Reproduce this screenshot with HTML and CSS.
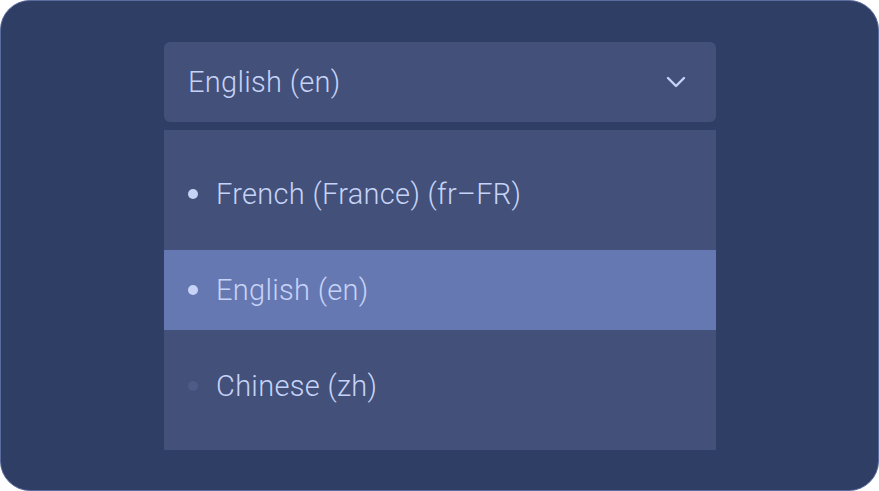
FILE: index.html
```html
<!DOCTYPE html>
<html lang="en">
<head>
  <meta charset="UTF-8" />
  <meta name="viewport" content="width=device-width, initial-scale=1.0"/>
  <title>Language Select</title>
  <link rel="stylesheet" href="styles.css">
</head>
<body>
  <div class="card">
    <div class="select">
      <button class="trigger">
        <span>English (en)</span>
        <svg class="chevron" width="20" height="12" viewBox="0 0 20 12">
          <path d="M2 2 L10 10 L18 2" fill="none" stroke="#c6d3f7" stroke-width="2.4" stroke-linecap="round" stroke-linejoin="round"/>
        </svg>
      </button>
      <ul class="options">
        <li class="option"><span class="dot"></span>French (France) (fr–FR)</li>
        <li class="option active"><span class="dot"></span>English (en)</li>
        <li class="option"><span class="dot dim"></span>Chinese (zh)</li>
      </ul>
    </div>
  </div>
</body>
</html>
```

FILE: styles.css
```css
html, body { margin: 0; background: #fff; }
body { font-family: Roboto, "Noto Sans", sans-serif; }
.card { box-sizing: border-box; width: 879px; height: 491px; background: #2f3e65; border: 1px solid #5a6c9e; border-radius: 30px; padding-top: 41px; }
.select { width: 552px; margin-left: 163px; }
.trigger { width: 100%; height: 80px; display: flex; align-items: center; justify-content: space-between; padding: 0 30px 0 24px; background: #42507a; border: none; border-radius: 6px; color: #c6d3f7; font-family: inherit; font-size: 29px; font-weight: 300; letter-spacing: 0.3px; box-sizing: border-box; }
.options { list-style: none; margin: 8px 0 0; padding: 24px 0; background: #42507a; display: flex; flex-direction: column; gap: 16px; }
.option { height: 80px; display: flex; align-items: center; padding-left: 24px; color: #c6d3f7; font-size: 29px; font-weight: 300; letter-spacing: 0.3px; }
.option.active { background: #6678b2; }
.dot { width: 10px; height: 10px; border-radius: 50%; background: #c6d3f7; margin-right: 18px; }
.dot.dim { background: #4e5b86; }
```
